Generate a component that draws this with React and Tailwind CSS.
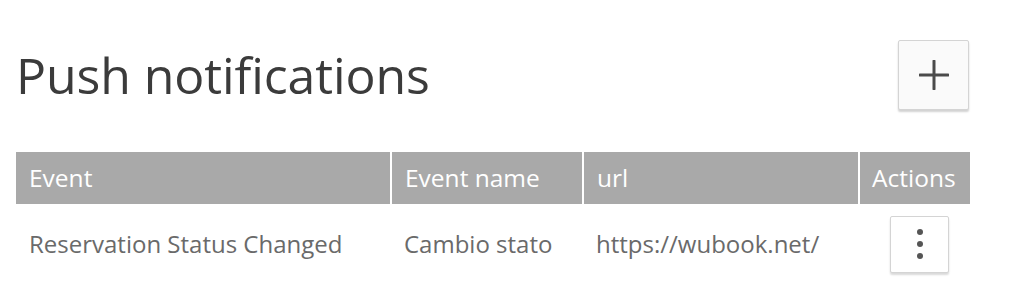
import React from 'react';

const rows = [
  { event: 'Reservation Status Changed', name: 'Cambio stato', url: 'https://wubook.net/' },
];

const Plus = () => (
  <svg width="30" height="30" viewBox="0 0 30 30" fill="none">
    <path d="M15 1v28M1 15h28" stroke="#4a4a4a" strokeWidth="3" strokeLinecap="round" />
  </svg>
);

const Dots = () => (
  <svg width="8" height="32" viewBox="0 0 8 32">
    <circle cx="4" cy="4" r="3" fill="#555" />
    <circle cx="4" cy="16" r="3" fill="#555" />
    <circle cx="4" cy="28" r="3" fill="#555" />
  </svg>
);

export default function App() {
  return (
    <div className="w-[1020px] h-[302px] bg-white font-['Open_Sans',sans-serif] overflow-hidden">
      {/* Title bar */}
      <div className="flex items-center justify-between pl-[16px] pr-[51px] pt-[40px] h-[110px]">
        <h1 className="text-[50px] leading-none text-[#3b3b3b] tracking-[-0.1px]">Push notifications</h1>
        <button className="w-[71px] h-[70px] flex items-center justify-center bg-[#fafafa] border border-[#d4d4d4] rounded-[2px] shadow-[0_2px_2px_rgba(0,0,0,0.18)]">
          <Plus />
        </button>
      </div>

      {/* Table */}
      <table className="ml-[16px] mt-[42px] border-collapse table-fixed w-[954px]">
        <colgroup>
          <col className="w-[375px]" />
          <col className="w-[192px]" />
          <col className="w-[276px]" />
          <col className="w-[111px]" />
        </colgroup>
        <thead>
          <tr className="h-[52px] bg-[#a9a9a9] text-white text-[24.5px] text-left">
            <th className="font-normal pl-[13px]">Event</th>
            <th className="font-normal pl-[13px] border-l-2 border-white">Event name</th>
            <th className="font-normal pl-[13px] border-l-2 border-white">url</th>
            <th className="font-normal pl-[12px] border-l-2 border-white">Actions</th>
          </tr>
        </thead>
        <tbody>
          {rows.map((r) => (
            <tr key={r.url} className="h-[80px] text-[24px] text-[#6a6a6a]">
              <td className="pl-[13px]">{r.event}</td>
              <td className="pl-[13px]">{r.name}</td>
              <td className="pl-[13px]">{r.url}</td>
              <td className="pl-[31px]">
                <button className="w-[59px] h-[57px] flex items-center justify-center bg-white border border-[#d4d4d4] rounded-[2px] shadow-[0_2px_2px_rgba(0,0,0,0.15)]">
                  <Dots />
                </button>
              </td>
            </tr>
          ))}
        </tbody>
      </table>
    </div>
  );
}
